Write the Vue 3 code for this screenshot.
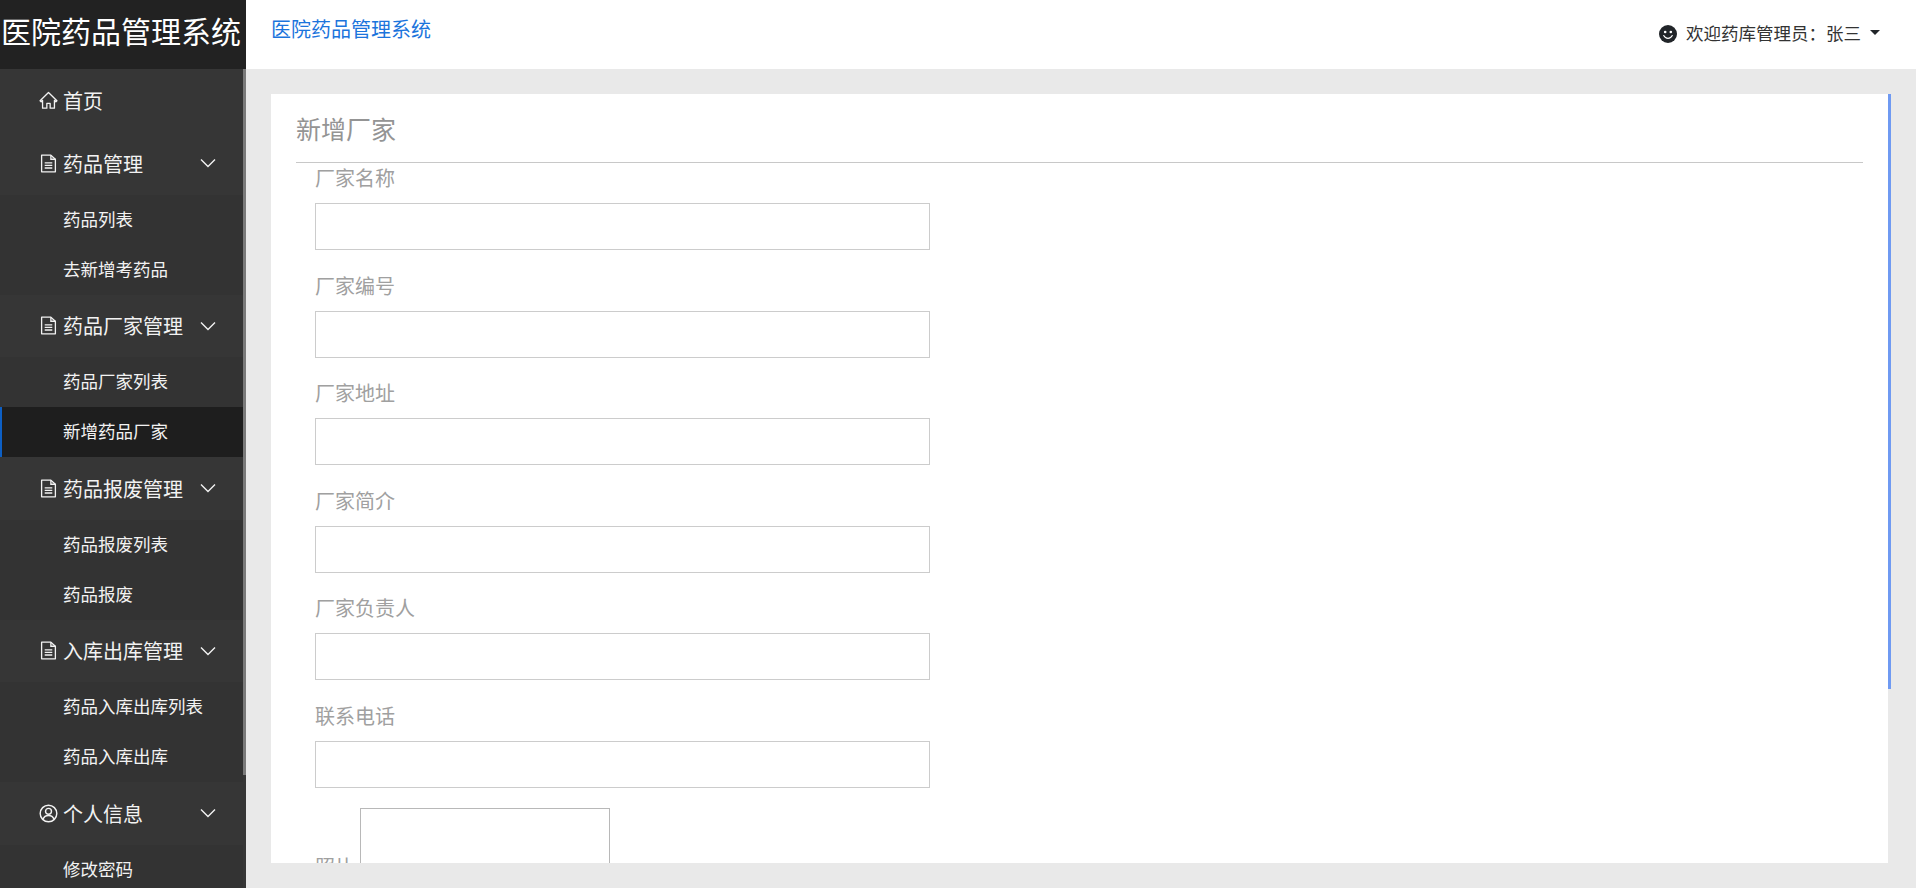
<template>
  <div class="layout">
    <aside class="sidebar">
      <div class="sidebar__logo">医院药品管理系统</div>
      <nav class="menu">
        <div class="menu__item menu__item--home">
          <svg class="menu__icon" viewBox="0 0 16 16" fill="none" stroke="currentColor" stroke-width="1.1">
            <path d="M8 1.200 .9 8.200l.9.900L3 8V14.500h3.600v-4h2.800v4H13V8l1.200 1.100.9-.9z" stroke-linejoin="round" />
          </svg>
          <span>首页</span>
        </div>
        <div v-for="group in groups" :key="group.title" class="menu__group">
          <div class="menu__item">
            <svg v-if="group.icon === 'file'" class="menu__icon" viewBox="0 0 16 16" fill="none" stroke="currentColor" stroke-width="1.1">
              <path d="M2.200 1H10l3.800 3.400V15H2.200z" stroke-linejoin="round" />
              <path d="M10 1v3.400h3.800M4.800 7.400h6.400M4.800 9.600h6.400M4.800 11.800h6.400" />
            </svg>
            <svg v-else class="menu__icon" viewBox="0 0 16 16" fill="none" stroke="currentColor" stroke-width="1.200">
              <circle cx="8" cy="8" r="7" />
              <circle cx="8" cy="6.200" r="2.500" />
              <path d="M3.300 13c.8-2.200 2.500-3.300 4.700-3.300s3.900 1.100 4.700 3.300" />
            </svg>
            <span>{{ group.title }}</span>
            <svg class="menu__arrow" viewBox="0 0 16 10" fill="none" stroke="currentColor" stroke-width="1.400">
              <path d="M1 1.500 8 8.500l7-7" />
            </svg>
          </div>
          <div
            v-for="child in group.children"
            :key="child"
            class="menu__sub"
            :class="{ active: child === activeItem }"
          >
            {{ child }}
          </div>
        </div>
      </nav>
      <div class="sidebar__thumb"></div>
    </aside>

    <div class="main">
      <header class="topbar">
        <a class="topbar__title">医院药品管理系统</a>
        <div class="topbar__user">
          <svg class="topbar__face" viewBox="0 0 16 16">
            <circle cx="8" cy="8" r="8" fill="#212529" />
            <circle cx="5.500" cy="6.200" r="1.150" fill="#fff" />
            <circle cx="10.500" cy="6.200" r="1.150" fill="#fff" />
            <path d="M4.200 9.400c.8 1.700 2.100 2.500 3.800 2.500s3-.8 3.800-2.500" fill="none" stroke="#fff" stroke-width="1" stroke-linecap="round" />
          </svg>
          <span>欢迎药库管理员：张三</span>
          <i class="topbar__caret"></i>
        </div>
      </header>

      <main class="content">
        <section class="card">
          <h2 class="card__title">新增厂家</h2>
          <form class="form">
            <div v-for="field in fields" :key="field" class="form__row">
              <label class="form__label">{{ field }}</label>
              <input class="form__input" type="text" />
            </div>
            <div class="form__photo">
              <label class="form__label">照片</label>
              <div class="form__preview"></div>
            </div>
          </form>
          <div class="card__thumb"></div>
        </section>
      </main>
    </div>
  </div>
</template>

<script setup>
const activeItem = "新增药品厂家";

const groups = [
  { title: "药品管理", icon: "file", children: ["药品列表", "去新增考药品"] },
  { title: "药品厂家管理", icon: "file", children: ["药品厂家列表", "新增药品厂家"] },
  { title: "药品报废管理", icon: "file", children: ["药品报废列表", "药品报废"] },
  { title: "入库出库管理", icon: "file", children: ["药品入库出库列表", "药品入库出库"] },
  { title: "个人信息", icon: "user", children: ["修改密码"] },
];

const fields = ["厂家名称", "厂家编号", "厂家地址", "厂家简介", "厂家负责人", "联系电话"];
</script>

<style>
html,
body {
  margin: 0;
  height: 100%;
  overflow: hidden;
}
</style>

<style scoped>
.layout {
  display: flex;
  height: 888px;
  overflow: hidden;
  font-family: "Noto Sans CJK SC", "Liberation Sans", sans-serif;
  background: #e9e9e9;
}

.sidebar {
  position: relative;
  flex: 0 0 246px;
  background: #363636;
  overflow: hidden;
  color: #f2f2f2;
}

.sidebar__logo {
  height: 69px;
  width: 246px;
  box-sizing: border-box;
  padding-right: 4px;
  background: #222222;
  color: #ffffff;
  font-size: 30px;
  line-height: 61px;
  text-align: center;
  white-space: nowrap;
}

.menu {
  padding-right: 3px;
}

.menu__item {
  display: flex;
  align-items: center;
  height: 62.500px;
  box-sizing: border-box;
  padding-left: 39px;
  font-size: 20px;
}

.menu__item--home {
  height: 63px;
}

.menu__icon {
  width: 19px;
  height: 19px;
  margin-right: 5px;
  flex: none;
}

.menu__arrow {
  width: 16px;
  height: 10px;
  margin-left: auto;
  margin-right: 27px;
}

.menu__sub {
  height: 50px;
  box-sizing: border-box;
  padding-left: 63px;
  line-height: 48px;
  font-size: 17.500px;
  background: #333333;
}

.menu__sub.active {
  background: #1e1e1e;
  border-left: 2px solid #0d5fc4;
  padding-left: 61px;
}

.sidebar__thumb {
  position: absolute;
  top: 69px;
  right: 0;
  width: 3px;
  height: 706px;
  background: #7a7a7a;
}

.main {
  flex: 1;
  min-width: 0;
  display: flex;
  flex-direction: column;
}

.topbar {
  flex: 0 0 69px;
  display: flex;
  justify-content: space-between;
  background: #ffffff;
  padding: 14px 36px 0 25px;
  box-sizing: border-box;
}

.topbar__title {
  color: #1b74dc;
  font-size: 20px;
  line-height: 30px;
}

.topbar__user {
  display: flex;
  align-items: center;
  height: 36px;
  color: #333333;
  font-size: 17.500px;
}

.topbar__face {
  width: 18px;
  height: 18px;
  margin-right: 9px;
  margin-top: 4px;
}

.topbar__caret {
  margin-left: 9px;
  border-top: 5px solid #212529;
  border-left: 5px solid transparent;
  border-right: 5px solid transparent;
}

.content {
  flex: 1;
  min-height: 0;
  padding: 25px 28px 25px 25px;
}

.card {
  position: relative;
  height: 769px;
  box-sizing: border-box;
  background: #ffffff;
  padding: 0 25px 0 25px;
}

.card__title {
  margin: 0;
  height: 69px;
  box-sizing: border-box;
  border-bottom: 1px solid #c8c8c8;
  color: #949494;
  font-size: 25px;
  font-weight: 400;
  line-height: 68px;
}

.form {
  height: 700px;
  overflow: hidden;
  padding: 0 0 0 19px;
}

.form__row {
  display: flex;
  flex-direction: column;
  align-items: flex-start;
  height: 107.500px;
}

.form__label {
  height: 40px;
  color: #a0a0a0;
  font-size: 20px;
  line-height: 30px;
}

.form__input {
  display: block;
  width: 615px;
  height: 47px;
  box-sizing: border-box;
  border: 1px solid #cccccc;
  background: #ffffff;
  outline: none;
}

.form__photo {
  display: flex;
  align-items: flex-end;
  gap: 5px;
}

.form__photo .form__label {
  height: 30px;
}

.form__preview {
  width: 250px;
  height: 74px;
  box-sizing: border-box;
  border: 1px solid #b8b8b8;
}

.card__thumb {
  position: absolute;
  top: 0;
  right: -3px;
  width: 3px;
  height: 595px;
  background: #6f9af2;
}
</style>
